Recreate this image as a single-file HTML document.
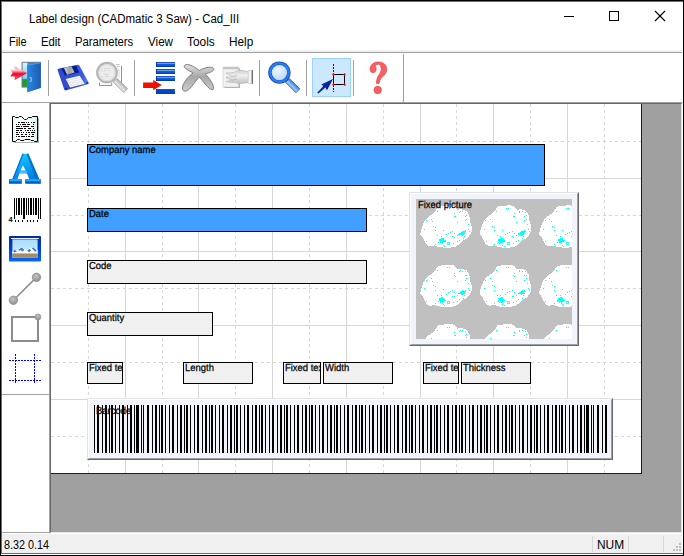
<!DOCTYPE html>
<html>
<head>
<meta charset="utf-8">
<title>Label design</title>
<style>
html,body{margin:0;padding:0;}
body{width:684px;height:556px;overflow:hidden;background:#fff;font-family:"Liberation Sans",sans-serif;color:#000;position:relative;}
.a{position:absolute;}
.t{position:absolute;white-space:pre;transform-origin:0 0;line-height:1;}
.ui{font-size:12px;}
.sep{position:absolute;width:1px;background:#a0a0a0;top:60px;height:36px;}
.fld{position:absolute;box-sizing:border-box;border:1px solid #000;overflow:hidden;}
.fld span{position:absolute;left:1.3px;top:0.85px;font-size:10.2px;text-rendering:geometricPrecision;-webkit-text-stroke:0.25px #000;line-height:1;white-space:pre;transform:scaleX(0.927);transform-origin:0 0;}
.blue{background:#409fff;}
.gray{background:#f0f0f0;}
.raised{position:absolute;box-sizing:border-box;background:#f1f5fb;border-style:solid;border-width:1px;border-color:#e3e3e3 #696969 #696969 #e3e3e3;}
.raised:before{content:"";position:absolute;left:0;top:0;right:0;bottom:0;border-style:solid;border-width:1px;border-color:#fff #a0a0a0 #a0a0a0 #fff;}
</style>
</head>
<body>
<!-- window frame -->
<div class="a" style="left:0;top:0;width:684px;height:556px;background:#000"></div>
<div class="a" style="left:1px;top:1px;width:682px;height:554px;background:#fff"></div>
<div class="a" style="left:1px;top:1px;width:682px;height:1px;background:#1883d7"></div>
<div class="a" style="left:1px;top:1px;width:1px;height:553px;background:#1883d7"></div>
<div class="a" style="left:1px;top:553px;width:682px;height:1px;background:#1883d7"></div>

<!-- title bar -->
<div class="t ui" id="title" style="left:29px;top:13px;transform:scaleX(0.958)">Label design (CADmatic 3 Saw) - Cad_III</div>
<svg class="a" style="left:560px;top:6px" width="112" height="20" viewBox="0 0 112 20" shape-rendering="crispEdges">
  <rect x="4" y="10" width="10" height="1" fill="#000"/>
  <rect x="49.5" y="5.5" width="9" height="9" fill="none" stroke="#000" stroke-width="1"/>
  <g shape-rendering="auto" stroke="#000" stroke-width="1.1"><line x1="95" y1="5" x2="105" y2="15"/><line x1="105" y1="5" x2="95" y2="15"/></g>
</svg>

<!-- menu bar -->
<div class="t ui" style="left:9px;top:36px;transform:scaleX(0.905)">File</div>
<div class="t ui" style="left:40.5px;top:36px;transform:scaleX(0.942)">Edit</div>
<div class="t ui" style="left:74.5px;top:36px;transform:scaleX(0.939)">Parameters</div>
<div class="t ui" style="left:148px;top:36px;transform:scaleX(0.969)">View</div>
<div class="t ui" style="left:186.8px;top:36px;transform:scaleX(0.99)">Tools</div>
<div class="t ui" style="left:228.5px;top:36px;transform:scaleX(0.982)">Help</div>
<div class="a" style="left:2px;top:50px;width:680px;height:2px;background:#f0f0f0"></div>
<div class="a" style="left:2px;top:52px;width:680px;height:1px;background:#a0a0a0"></div>

<!-- toolbar -->
<div class="sep" style="left:48px"></div>
<div class="sep" style="left:134px"></div>
<div class="sep" style="left:259px"></div>
<div class="sep" style="left:306px"></div>
<div class="sep" style="left:353px"></div>
<div class="a" style="left:403px;top:54px;width:1px;height:48px;background:#a0a0a0"></div>
<div class="a" style="left:312px;top:58px;width:39px;height:39px;box-sizing:border-box;background:#cce8ff;border:1px solid #99d1ff"></div>
<!--TB-START--><svg class="a" style="left:0;top:53px" width="404" height="49" viewBox="0 53 404 49">
<defs>
  <linearGradient id="gRed" x1="0" y1="0" x2="0" y2="1"><stop offset="0" stop-color="#ff98a8"/><stop offset="0.3" stop-color="#ffd0d8"/><stop offset="0.55" stop-color="#ee0828"/><stop offset="1" stop-color="#e86070"/></linearGradient>
  <linearGradient id="gDoor" x1="0" y1="0" x2="1" y2="0"><stop offset="0" stop-color="#2a86e0"/><stop offset="1" stop-color="#1a5cb4"/></linearGradient>
  <linearGradient id="gSky" x1="0" y1="0" x2="0" y2="1"><stop offset="0" stop-color="#d8f4fc"/><stop offset="1" stop-color="#7cc8f0"/></linearGradient>
  <linearGradient id="gFl" x1="0" y1="0" x2="1" y2="0"><stop offset="0" stop-color="#3048c8"/><stop offset="0.8" stop-color="#3c58e0"/><stop offset="1" stop-color="#7090f8"/></linearGradient>
  <linearGradient id="gMetal" x1="0" y1="0" x2="1" y2="0"><stop offset="0" stop-color="#d8d8d8"/><stop offset="0.5" stop-color="#a0a0a0"/><stop offset="1" stop-color="#c0c0c0"/></linearGradient>
  <linearGradient id="gHandleG" x1="0.25" y1="0.75" x2="0.75" y2="0.25"><stop offset="0" stop-color="#a8a8a8"/><stop offset="0.4" stop-color="#e4e4e4"/><stop offset="0.75" stop-color="#b4b4b4"/><stop offset="1" stop-color="#8c8c8c"/></linearGradient>
  <linearGradient id="gHandleB" x1="0.25" y1="0.75" x2="0.75" y2="0.25"><stop offset="0" stop-color="#2a6cd0"/><stop offset="0.4" stop-color="#9cc8f8"/><stop offset="0.75" stop-color="#3a84e4"/><stop offset="1" stop-color="#1c54b8"/></linearGradient>
  <linearGradient id="gBar" x1="0" y1="0" x2="0" y2="1"><stop offset="0" stop-color="#002c9c"/><stop offset="0.3" stop-color="#6c9ce4"/><stop offset="0.5" stop-color="#0a5ce4"/><stop offset="0.8" stop-color="#0a50d0"/><stop offset="1" stop-color="#002c9c"/></linearGradient>
  <linearGradient id="gX" x1="0" y1="0" x2="0" y2="1"><stop offset="0" stop-color="#e0e0e0"/><stop offset="0.45" stop-color="#a8a8a8"/><stop offset="1" stop-color="#cccccc"/></linearGradient>
  <linearGradient id="gHand" x1="0" y1="0" x2="0" y2="1"><stop offset="0" stop-color="#cfcfcf"/><stop offset="0.4" stop-color="#efefef"/><stop offset="1" stop-color="#c2c2c2"/></linearGradient>
  <radialGradient id="gLensB" cx="0.4" cy="0.35" r="0.7"><stop offset="0" stop-color="#eef6fe"/><stop offset="1" stop-color="#b8d8f8"/></radialGradient>
  <linearGradient id="gArrowB" x1="0" y1="0" x2="1" y2="1"><stop offset="0" stop-color="#0a3cb0"/><stop offset="1" stop-color="#00107c"/></linearGradient>
</defs>
<!-- 1 door / exit -->
<g>
  <rect x="21.5" y="61.8" width="19.5" height="25.8" fill="#6c7c8c"/>
  <rect x="22.6" y="62.8" width="5" height="16.4" fill="url(#gSky)"/>
  <rect x="22.6" y="79.2" width="5" height="7.4" fill="#1fa020"/>
  <polygon points="27.1,64.7 40.8,62.3 40.8,88 27.1,92.4" fill="url(#gDoor)"/>
  <polygon points="27.1,64.7 40.8,62.3 40.8,63.3 27.1,65.7" fill="#4aa0ec"/>
  <path d="M29.6,77.4 h1.6 v4 h-1.6" fill="none" stroke="#a8dcfc" stroke-width="0.9"/>
  <polygon points="10.2,69.6 14.9,69.6 14.6,65.9 27.2,73 14.6,80.2 14.9,76.4 10.2,76.4 12.6,73" fill="url(#gRed)"/>
</g>
<!-- 2 floppy -->
<g>
  <polygon points="57.4,69.6 59,68.6 78,64.8 79.3,65.4 89,83 88.6,84 65.6,90.6 64.4,90" fill="url(#gFl)"/>
  <polygon points="61.5,68.6 76,65.6 79.2,72.4 64.9,75.6" fill="#00208c"/>
  <polygon points="63.9,67.8 71.4,66.2 74.6,72.6 67,74.7" fill="url(#gMetal)"/>
  <polygon points="65.8,79 79.6,75.8 84.8,83.7 70.2,87.6" fill="#fafafa"/>
  <g stroke="#c8c8d0" stroke-width="0.5"><line x1="67" y1="80.6" x2="80.6" y2="77.4"/><line x1="68" y1="82.4" x2="81.8" y2="79.2"/><line x1="69" y1="84.2" x2="83" y2="81"/><line x1="70" y1="86" x2="84" y2="82.6"/></g>
  <circle cx="66.2" cy="88.6" r="0.9" fill="#102060"/><circle cx="87" cy="83" r="0.9" fill="#102060"/>
</g>
<!-- 3 preview magnifier (gray) -->
<g>
  <path d="M116,64.5 h3.6 M117,66.5 h2.4" fill="none" stroke="#c4c4c4" stroke-width="1"/><path d="M121.5,65.8 v16.6 M99.5,82.6 v2.9 h12.2 v-2.6" fill="none" stroke="#909090" stroke-width="1"/>
  <path d="M117.5,69.5 h1.6 v9" fill="none" stroke="#d0d0d0" stroke-width="0.8"/>
  <circle cx="107" cy="72.6" r="9.8" fill="#ededed" stroke="#b6b6b6" stroke-width="2.2"/>
  <circle cx="107" cy="72.6" r="8" fill="none" stroke="#dcdcdc" stroke-width="1"/>
  <g stroke="#d2d2d2" stroke-width="0.8"><line x1="104" y1="68.4" x2="110" y2="68.4"/><line x1="104" y1="70.6" x2="106" y2="70.6"/><line x1="108" y1="70.6" x2="109.5" y2="70.6"/><line x1="104" y1="74.4" x2="109" y2="74.4"/><line x1="101.5" y1="76.6" x2="103.5" y2="76.6"/><line x1="105" y1="76.6" x2="109" y2="76.6"/><line x1="102" y1="68" x2="102" y2="72"/></g>
  <polygon points="113.2,82 117,78.4 127.6,88.4 123.8,92.6" fill="url(#gHandleG)" stroke="#9a9a9a" stroke-width="0.7"/>
</g>
<!-- 4 insert row -->
<g>
  <rect x="156" y="62" width="19" height="5" fill="url(#gBar)"/>
  <rect x="156" y="69" width="19" height="5" fill="url(#gBar)"/>
  <rect x="156" y="76" width="19" height="5" fill="url(#gBar)"/>
  <rect x="156" y="89" width="19" height="5" fill="url(#gBar)"/>
  <rect x="156" y="62" width="0.8" height="5" fill="#002c9c"/><rect x="156" y="69" width="0.8" height="5" fill="#002c9c"/><rect x="156" y="76" width="0.8" height="5" fill="#002c9c"/><rect x="156" y="89" width="0.8" height="5" fill="#002c9c"/>
  <rect x="156.8" y="90" width="17.6" height="3.2" fill="#0a44c4"/>
  <polygon points="143.1,82.5 153.2,82.5 153.2,80 161.8,85.1 153.2,90.2 153.2,88 143.1,88" fill="#ee1100"/>
</g>
<!-- 5 X (gray) -->
<g>
  <path d="M184.3,66 C185.5,63.6 190.5,63.6 199.2,70.4 C205,67.2 212.6,66.2 213.7,68.6 C214.6,71 210,72.6 205.2,74 C209.6,78 215.4,87 213.2,89.4 C210.6,91.4 205.6,84.6 199.4,77 C194.6,81.6 189.6,91.8 184.4,91.2 C179.4,89.6 184.4,79.4 193,73 C189,70.6 183.6,68.4 184.3,66 Z" fill="url(#gX)" stroke="#767676" stroke-width="0.9"/>
</g>
<!-- 6 hand on page (gray) -->
<g>
  <rect x="224.4" y="68.4" width="15.4" height="19.6" fill="#9e9e9e"/>
  <rect x="223" y="67" width="15.6" height="20" fill="#f1f1f1" stroke="#d4d4d4" stroke-width="0.8"/>
  <rect x="223" y="67" width="15.4" height="2.2" fill="#c4c4c4"/>
  <g fill="#a8a8a8"><rect x="226" y="72.6" width="1" height="1"/><rect x="226" y="76.8" width="1" height="1"/><rect x="226" y="81.2" width="1" height="1"/></g>
  <path d="M227.6,73 L233.5,72.4 L236.8,71 C239.5,69.8 242.4,69.8 244.4,70.8 L248.4,71.6 V82.8 L244,83.2 C241,84 237.6,83.6 235,82.6 L228,82.2 L227.6,81 L232.8,80 L227.2,78.4 L227,77.2 L233,76.4 L227.6,74.4 Z" fill="url(#gHand)" stroke="#b0b0b0" stroke-width="0.5"/>
  <path d="M233,76.4 L237,75.6 M232.8,80 L236.6,79.2" stroke="#a4a4a4" stroke-width="0.6" fill="none"/>
  <rect x="248.2" y="70.4" width="4.6" height="13.2" fill="#f6f6f6" stroke="#c4c4c4" stroke-width="0.5"/>
  <rect x="251.6" y="70.2" width="1.4" height="13.6" fill="#6e6e6e"/>
</g>
<!-- 7 zoom (blue) -->
<g>
  <polygon points="285.6,82.4 289.4,78.6 299.8,88.8 296,92.8" fill="url(#gHandleB)" stroke="#1d50b4" stroke-width="0.7"/>
  <circle cx="279.4" cy="72.6" r="11.2" fill="#1c4cae"/>
  <circle cx="279.4" cy="72.6" r="10.3" fill="#2a80f2"/>
  <circle cx="279.4" cy="72.6" r="8.3" fill="#1e58c4"/>
  <circle cx="279.4" cy="72.6" r="7.7" fill="url(#gLensB)"/>
</g>
<!-- 8 select/snap tool -->
<g shape-rendering="crispEdges">
  <line x1="333.5" y1="64" x2="333.5" y2="92" stroke="#0000ff" stroke-width="1" stroke-dasharray="2 1"/>
  <rect x="333.5" y="74.5" width="11" height="10" fill="none" stroke="#000" stroke-width="1"/>
</g>
<g fill="#ff0000"><path d="M333.5,73 l1.5,1.5 l-1.5,1.5 l-1.5,-1.5z M344.5,73 l1.5,1.5 l-1.5,1.5 l-1.5,-1.5z M333.5,83 l1.5,1.5 l-1.5,1.5 l-1.5,-1.5z M344.5,83 l1.5,1.5 l-1.5,1.5 l-1.5,-1.5z"/></g>
<path d="M333,79 L327,90.2 L325.4,87.6 L318.4,93.6 L317.2,92.8 L323.4,86 L321.2,84.6 Z" fill="url(#gArrowB)"/>
<!-- 9 help -->
<g fill="#f66064" stroke="#f03c42" stroke-width="0.7">
<path d="M370.1,69.4 C370.1,64.5 374,62 378.3,62 C383.5,62 386.7,65 386.7,69.2 C386.7,73 384,75.4 382,77.2 C380,79.2 379.4,81 379.1,83.4 L376.5,83.4 C376.4,80 377.2,77.4 379.2,74.6 C380.6,72.6 381.2,71 381.2,69.2 C381.2,66 380,64.2 378.2,64.2 C376.8,64.2 375.6,65 375.2,66.2 C376.4,67 376.6,70 375.4,71.6 C374,73.4 370.1,73 370.1,69.4 Z"/>
<circle cx="377.7" cy="90" r="3.7"/>
</g>
</svg>
<!--TB-END-->

<!-- left panel + canvas frame -->
<div class="a" style="left:2px;top:102px;width:680px;height:1px;background:#a0a0a0"></div>
<div class="a" style="left:2px;top:394px;width:47px;height:1px;background:#a0a0a0"></div>
<div class="a" style="left:2px;top:532px;width:47px;height:1px;background:#a0a0a0"></div>
<div class="a" style="left:49px;top:102px;width:634px;height:432px;box-sizing:border-box;border-style:solid;border-width:1px;border-color:#a0a0a0 #fff #fff #a0a0a0;background:#a0a0a0">
  <div class="a" style="left:0;top:0;right:0;bottom:0;border-style:solid;border-width:1px;border-color:#696969 #e3e3e3 #e3e3e3 #696969"></div>
</div>
<!--LI-START--><svg class="a" style="left:2px;top:104px" width="47" height="290" viewBox="2 104 47 290">
<defs>
  <linearGradient id="gPaper" x1="0" y1="0" x2="1" y2="0"><stop offset="0" stop-color="#e4fafa"/><stop offset="0.3" stop-color="#ffffff"/><stop offset="0.7" stop-color="#f4ffff"/><stop offset="1" stop-color="#d0f4f4"/></linearGradient>
  <linearGradient id="gA" x1="0" y1="0" x2="0.3" y2="1"><stop offset="0" stop-color="#20c8ff"/><stop offset="0.6" stop-color="#08a4f4"/><stop offset="1" stop-color="#0880e8"/></linearGradient>
  <linearGradient id="gFrame" x1="0" y1="0" x2="0" y2="1"><stop offset="0" stop-color="#002c98"/><stop offset="0.5" stop-color="#0040c8"/><stop offset="1" stop-color="#0868f8"/></linearGradient>
  <linearGradient id="gSky2" x1="0" y1="0" x2="0" y2="1"><stop offset="0" stop-color="#a8dcfc"/><stop offset="1" stop-color="#d8f0ff"/></linearGradient>
  <radialGradient id="gBall" cx="0.45" cy="0.35" r="0.7"><stop offset="0" stop-color="#c4c4c4"/><stop offset="1" stop-color="#8a8a8a"/></radialGradient>
</defs>
<!-- receipt -->
<path d="M38.5,118 V142.5 H14" fill="none" stroke="#b0b0b0" stroke-width="1"/>
<path d="M12.5,116.5 H14.5 L15.5,117.5 H18.5 L19.5,116.5 H21.5 L24.5,119.5 H26.5 L28.5,117.5 H31.5 L32.5,116.5 H37.5 V141.5 H34.5 L33.5,140.5 H31 L30,139.5 H25 L24,140.5 H20.5 L19.5,139.5 H17.5 L15.5,141.5 H12.5 Z" fill="url(#gPaper)" stroke="#000" stroke-width="1" stroke-linejoin="miter"/>
<g fill="#000" shape-rendering="crispEdges"><rect x="18" y="122" width="2" height="1"/><rect x="21" y="122" width="4" height="1"/><rect x="26" y="122" width="1" height="1"/><rect x="28" y="122" width="1" height="1"/><rect x="31" y="122" width="1" height="1"/><rect x="33" y="122" width="2" height="1"/><rect x="16" y="124" width="1" height="1"/><rect x="18" y="124" width="1" height="1"/><rect x="20" y="124" width="1" height="1"/><rect x="22" y="124" width="4" height="1"/><rect x="27" y="124" width="3" height="1"/><rect x="33" y="124" width="1" height="1"/><rect x="16" y="126" width="4" height="1"/><rect x="21" y="126" width="1" height="1"/><rect x="23" y="126" width="6" height="1"/><rect x="31" y="126" width="3" height="1"/><rect x="16" y="128" width="7" height="1"/><rect x="24" y="128" width="2" height="1"/><rect x="28" y="128" width="3" height="1"/><rect x="33" y="128" width="1" height="1"/><rect x="16" y="130" width="3" height="1"/><rect x="20" y="130" width="2" height="1"/><rect x="25" y="130" width="1" height="1"/><rect x="27" y="130" width="2" height="1"/><rect x="30" y="130" width="1" height="1"/><rect x="32" y="130" width="1" height="1"/><rect x="34" y="130" width="1" height="1"/><rect x="16" y="132" width="2" height="1"/><rect x="19" y="132" width="1" height="1"/><rect x="21" y="132" width="1" height="1"/><rect x="23" y="132" width="1" height="1"/><rect x="26" y="132" width="1" height="1"/><rect x="28" y="132" width="2" height="1"/><rect x="31" y="132" width="4" height="1"/><rect x="16" y="134" width="3" height="1"/><rect x="21" y="134" width="2" height="1"/><rect x="25" y="134" width="2" height="1"/><rect x="29" y="134" width="1" height="1"/><rect x="32" y="134" width="2" height="1"/><rect x="16" y="136" width="1" height="1"/><rect x="18" y="136" width="2" height="1"/><rect x="21" y="136" width="4" height="1"/><rect x="26" y="136" width="1" height="1"/><rect x="28" y="136" width="2" height="1"/><rect x="31" y="136" width="3" height="1"/></g>
<!-- A -->
<g>
<path d="M22.4,153.8 L28.4,153.8 L39.4,179.6 L29.4,179.6 L27,173.6 L19.4,173.6 L17.4,179.6 L12.2,179.6 Z M22.9,165.6 L25.8,170.6 L20.4,170.6 Z" fill="url(#gA)" fill-rule="evenodd"/>
<polygon points="26.6,153.8 28.4,153.8 39.4,179.6 36,179.6" fill="#0a70c4"/>
<polygon points="22.4,153.8 23.6,153.8 13.6,179.6 12.2,179.6" fill="#0a6cd8"/>
<rect x="19.6" y="171.6" width="7.2" height="1" fill="#8cdcff"/>
<rect x="9" y="179.2" width="12.8" height="4.6" fill="#0a58cc"/>
<rect x="25.2" y="179.2" width="15.7" height="4.6" fill="#0a58cc"/>
<polygon points="10.4,179.2 21.4,179.2 20.4,181.2 9,181.2" fill="#18b0f8"/>
<polygon points="26.4,179.2 39.6,179.2 40.9,181.2 25.2,181.2" fill="#18b0f8"/>
</g>
<!-- barcode -->
<g fill="#000" shape-rendering="crispEdges">
  <rect x="14" y="198" width="1" height="21"/><rect x="16" y="198" width="1" height="17"/><rect x="18" y="198" width="2" height="17"/><rect x="21" y="198" width="1" height="17"/><rect x="23" y="198" width="2" height="21"/><rect x="26" y="198" width="1" height="17"/><rect x="28" y="198" width="1" height="17"/><rect x="30" y="198" width="2" height="17"/><rect x="33" y="198" width="1" height="17"/><rect x="35" y="198" width="2" height="17"/><rect x="38" y="198" width="1" height="21"/><rect x="40" y="198" width="1" height="21"/>
  <rect x="15" y="220" width="1" height="2"/><rect x="18" y="220" width="1" height="2"/><rect x="22" y="220" width="1" height="2"/><rect x="27" y="220" width="1" height="2"/><rect x="30" y="220" width="1" height="2"/><rect x="33" y="220" width="1" height="2"/><rect x="37" y="220" width="1" height="2"/>
</g>
<text x="8.4" y="222" font-family="Liberation Sans, sans-serif" font-weight="bold" font-size="7.4" fill="#000">4</text>
<!-- picture -->
<rect x="9" y="236" width="32" height="25.4" rx="1" fill="url(#gFrame)"/>
<rect x="11" y="238" width="28" height="1" fill="#e8f0ff"/>
<rect x="12.4" y="239.4" width="25.2" height="18.4" fill="url(#gSky2)"/>
<path d="M12.4,251.6 L14.4,249.6 L16.4,250.8 L18.6,248.6 L21.8,247.2 L24,248.8 L26.4,250.6 L29,248.6 L32.6,247.4 L35,248.8 L37.6,250.4 V254 H12.4 Z" fill="#fff"/>
<path d="M13,251 L15,249.8 L16.8,251.6 L14.6,252.6 Z M18.4,249.4 L21.8,247.4 L24.4,250 L22.6,251.6 L20.4,250 L19,251.2 Z M27.2,250.4 L29.6,248.8 L31,250.6 L29,252.6 Z M31.6,248.2 L33.4,247.6 L36.6,250.6 L35.2,252 L33.6,250 Z" fill="#2c7cf0"/>
<rect x="12.4" y="253.4" width="25.2" height="4.4" fill="#ac8a64"/>
<rect x="12.4" y="254.6" width="25.2" height="1" fill="#9a8878" opacity="0.6"/>
<!-- line -->
<line x1="13.4" y1="300.2" x2="36.4" y2="277.4" stroke="#8a8a8a" stroke-width="1.5"/>
<circle cx="13.4" cy="300.3" r="4.2" fill="url(#gBall)" stroke="#8e8e8e" stroke-width="0.8"/>
<circle cx="36.5" cy="277.3" r="4.2" fill="url(#gBall)" stroke="#8e8e8e" stroke-width="0.8"/>
<!-- rect -->
<rect x="12" y="317" width="26" height="24" fill="none" stroke="#8c8c8c" stroke-width="2" shape-rendering="crispEdges"/>
<circle cx="37.9" cy="316.9" r="3" fill="url(#gBall)" stroke="#8e8e8e" stroke-width="0.6"/>
<!-- dotted selection -->
<g stroke="#0000ff" stroke-width="1" stroke-dasharray="2 1" shape-rendering="crispEdges">
  <line x1="9" y1="360.5" x2="41" y2="360.5"/><line x1="9" y1="380.5" x2="41" y2="380.5"/>
  <line x1="15.5" y1="354" x2="15.5" y2="384"/><line x1="34.5" y1="354" x2="34.5" y2="384"/>
</g>
</svg>
<!--LI-END-->

<!-- page -->
<div class="a" style="left:51px;top:104px;width:591px;height:370px;background:#0000ff"></div>
<div class="a" id="page" style="left:51px;top:104px;width:590px;height:369px;background:#fff;overflow:hidden">
<svg class="a" style="left:0;top:0" width="590" height="369" shape-rendering="crispEdges" stroke="#d6d6d6" stroke-width="1">
  <g stroke-dasharray="3 3">
    <line x1="37.5" y1="0" x2="37.5" y2="369"/><line x1="111.5" y1="0" x2="111.5" y2="369"/><line x1="184.5" y1="0" x2="184.5" y2="369"/><line x1="258.5" y1="0" x2="258.5" y2="369"/><line x1="332.5" y1="0" x2="332.5" y2="369"/><line x1="405.5" y1="0" x2="405.5" y2="369"/><line x1="479.5" y1="0" x2="479.5" y2="369"/><line x1="553.5" y1="0" x2="553.5" y2="369"/>
    <line x1="0" y1="37.5" x2="590" y2="37.5"/><line x1="0" y1="111.5" x2="590" y2="111.5"/><line x1="0" y1="184.5" x2="590" y2="184.5"/><line x1="0" y1="258.5" x2="590" y2="258.5"/><line x1="0" y1="332.5" x2="590" y2="332.5"/>
  </g>
  <g>
    <line x1="74.5" y1="0" x2="74.5" y2="369"/><line x1="147.5" y1="0" x2="147.5" y2="369"/><line x1="221.5" y1="0" x2="221.5" y2="369"/><line x1="295.5" y1="0" x2="295.5" y2="369"/><line x1="369.5" y1="0" x2="369.5" y2="369"/><line x1="442.5" y1="0" x2="442.5" y2="369"/><line x1="516.5" y1="0" x2="516.5" y2="369"/>
    <line x1="0" y1="74.5" x2="590" y2="74.5"/><line x1="0" y1="147.5" x2="590" y2="147.5"/><line x1="0" y1="221.5" x2="590" y2="221.5"/><line x1="0" y1="295.5" x2="590" y2="295.5"/>
  </g>
</svg>
<!-- fields (coordinates relative to page: x-51, y-104) -->
<div class="fld blue" style="left:36px;top:40px;width:458px;height:42px"><span>Company name</span></div>
<div class="fld blue" style="left:36px;top:104px;width:280px;height:24px"><span>Date</span></div>
<div class="fld gray" style="left:36px;top:156px;width:280px;height:24px"><span>Code</span></div>
<div class="fld gray" style="left:36px;top:208px;width:126px;height:24px"><span>Quantity</span></div>
<div class="fld gray" style="left:36px;top:258px;width:36px;height:22px"><span>Fixed text</span></div>
<div class="fld gray" style="left:132px;top:258px;width:70px;height:22px"><span>Length</span></div>
<div class="fld gray" style="left:232px;top:258px;width:38px;height:22px"><span>Fixed text</span></div>
<div class="fld gray" style="left:272px;top:258px;width:70px;height:22px"><span>Width</span></div>
<div class="fld gray" style="left:372px;top:258px;width:36px;height:22px"><span>Fixed text</span></div>
<div class="fld gray" style="left:410px;top:258px;width:70px;height:22px"><span>Thickness</span></div>
<!--PIC-START--><div class="raised" style="left:358px;top:88px;width:170px;height:154px"></div>
<svg class="a" style="left:365px;top:95px" width="156" height="140" viewBox="0 0 156 140" shape-rendering="crispEdges"><rect width="156" height="140" fill="#c0c0c0"/><g transform="translate(0.0,0.0)"><polygon points="22.1,7.6 28,6.7 35.6,6.3 38.8,7.6 41.5,10.8 45.3,10.2 50.7,11.9 53.4,16.2 53.9,21.6 55.6,27 55.6,32.4 53.4,36.7 50.7,39.9 47.5,41 45.3,43.1 43.1,45.3 39.9,47.5 34.5,48.5 31.3,49.1 27,48.5 22.7,48 18.3,46.4 14,47.5 10.8,45.8 8.6,42.1 6.5,37.8 4.3,35.6 4.9,31.3 6.5,27 7.6,23.7 9.7,20.5 12.9,17.3 16.2,15.1 19.4,11.9 21,9.2" fill="#fff"/><g fill="#00ffff"><rect x="30.8" y="9.0" width="1" height="1"/><rect x="32.9" y="9.0" width="1" height="1"/><rect x="20.9" y="11.9" width="1" height="1"/><rect x="43.2" y="13.0" width="1" height="1"/><rect x="46.4" y="12.4" width="1" height="1"/><rect x="48.6" y="16.8" width="1" height="1"/><rect x="50.2" y="16.2" width="1" height="1"/><rect x="38.3" y="14.1" width="1" height="1"/><rect x="37.8" y="16.8" width="1" height="1"/><rect x="41.0" y="22.7" width="1" height="1"/><rect x="48.6" y="21.1" width="1" height="1"/><rect x="51.8" y="24.9" width="1" height="1"/><rect x="52.4" y="29.7" width="1" height="1"/><rect x="53.4" y="31.9" width="1" height="1"/><rect x="14.6" y="20.0" width="1" height="1"/><rect x="9.7" y="21.1" width="1" height="1"/><rect x="16.2" y="22.2" width="1" height="1"/><rect x="16.8" y="27.0" width="1" height="1"/><rect x="18.9" y="27.5" width="1" height="1"/><rect x="18.9" y="31.3" width="1" height="1"/><rect x="8.1" y="30.0" width="1" height="1"/><rect x="27.0" y="30.8" width="1" height="1"/><rect x="21.1" y="36.2" width="1" height="1"/><rect x="24.9" y="36.7" width="1" height="1"/><rect x="29.7" y="35.1" width="1" height="1"/><rect x="31.9" y="34.0" width="1" height="1"/><rect x="34.0" y="32.9" width="1" height="1"/><rect x="36.2" y="31.9" width="1" height="1"/><rect x="38.3" y="34.0" width="1" height="1"/><rect x="40.5" y="36.2" width="1" height="1"/><rect x="36.2" y="37.3" width="1" height="1"/><rect x="37.8" y="37.8" width="1" height="1"/><rect x="42.6" y="40.5" width="1" height="1"/><rect x="41.0" y="42.1" width="1" height="1"/><rect x="47.0" y="39.4" width="1" height="1"/><rect x="48.0" y="36.7" width="1" height="1"/><rect x="22.7" y="40.0" width="1" height="1"/><rect x="22.2" y="42.6" width="1" height="1"/><rect x="10.3" y="42.1" width="1" height="1"/><rect x="18.9" y="44.8" width="1" height="1"/><rect x="37.3" y="43.7" width="1" height="1"/><rect x="27.0" y="45.9" width="1" height="1"/><rect x="28.1" y="47.0" width="1" height="1"/><rect x="43.7" y="11.9" width="1" height="1"/><rect x="49.1" y="13.0" width="1" height="1"/><rect x="38.9" y="17.3" width="1" height="1"/><rect x="50.4" y="19.5" width="1" height="1"/><path d="M24,40 l2,-1.4 l1.6,0.6 l0.8,1.8 l1.6,0.4 l-0.6,1.6 l-2,0.2 l-0.6,2.2 l-1.2,-1.6 l-1.8,1 l0.6,-2.2 l-1.8,-0.4 z"/><path d="M42.4,34.6 l2.6,-1 l1.6,-1.6 l2,0.4 l0.6,-1.4 l1,1.6 l-1.4,1.4 l0.4,1.4 l-2,0.2 l-1,1.6 l-1.2,-1.6 l-2.6,0.2 z"/><rect x="31.6" y="43" width="2.2" height="2.2" fill="none" stroke="#00ffff" stroke-width="0.8"/></g></g><g transform="translate(59.4,0.0)"><polygon points="22.1,7.6 28,6.7 35.6,6.3 38.8,7.6 41.5,10.8 45.3,10.2 50.7,11.9 53.4,16.2 53.9,21.6 55.6,27 55.6,32.4 53.4,36.7 50.7,39.9 47.5,41 45.3,43.1 43.1,45.3 39.9,47.5 34.5,48.5 31.3,49.1 27,48.5 22.7,48 18.3,46.4 14,47.5 10.8,45.8 8.6,42.1 6.5,37.8 4.3,35.6 4.9,31.3 6.5,27 7.6,23.7 9.7,20.5 12.9,17.3 16.2,15.1 19.4,11.9 21,9.2" fill="#fff"/><g fill="#00ffff"><rect x="30.8" y="9.0" width="1" height="1"/><rect x="32.9" y="9.0" width="1" height="1"/><rect x="20.9" y="11.9" width="1" height="1"/><rect x="43.2" y="13.0" width="1" height="1"/><rect x="46.4" y="12.4" width="1" height="1"/><rect x="48.6" y="16.8" width="1" height="1"/><rect x="50.2" y="16.2" width="1" height="1"/><rect x="38.3" y="14.1" width="1" height="1"/><rect x="37.8" y="16.8" width="1" height="1"/><rect x="41.0" y="22.7" width="1" height="1"/><rect x="48.6" y="21.1" width="1" height="1"/><rect x="51.8" y="24.9" width="1" height="1"/><rect x="52.4" y="29.7" width="1" height="1"/><rect x="53.4" y="31.9" width="1" height="1"/><rect x="14.6" y="20.0" width="1" height="1"/><rect x="9.7" y="21.1" width="1" height="1"/><rect x="16.2" y="22.2" width="1" height="1"/><rect x="16.8" y="27.0" width="1" height="1"/><rect x="18.9" y="27.5" width="1" height="1"/><rect x="18.9" y="31.3" width="1" height="1"/><rect x="8.1" y="30.0" width="1" height="1"/><rect x="27.0" y="30.8" width="1" height="1"/><rect x="21.1" y="36.2" width="1" height="1"/><rect x="24.9" y="36.7" width="1" height="1"/><rect x="29.7" y="35.1" width="1" height="1"/><rect x="31.9" y="34.0" width="1" height="1"/><rect x="34.0" y="32.9" width="1" height="1"/><rect x="36.2" y="31.9" width="1" height="1"/><rect x="38.3" y="34.0" width="1" height="1"/><rect x="40.5" y="36.2" width="1" height="1"/><rect x="36.2" y="37.3" width="1" height="1"/><rect x="37.8" y="37.8" width="1" height="1"/><rect x="42.6" y="40.5" width="1" height="1"/><rect x="41.0" y="42.1" width="1" height="1"/><rect x="47.0" y="39.4" width="1" height="1"/><rect x="48.0" y="36.7" width="1" height="1"/><rect x="22.7" y="40.0" width="1" height="1"/><rect x="22.2" y="42.6" width="1" height="1"/><rect x="10.3" y="42.1" width="1" height="1"/><rect x="18.9" y="44.8" width="1" height="1"/><rect x="37.3" y="43.7" width="1" height="1"/><rect x="27.0" y="45.9" width="1" height="1"/><rect x="28.1" y="47.0" width="1" height="1"/><rect x="43.7" y="11.9" width="1" height="1"/><rect x="49.1" y="13.0" width="1" height="1"/><rect x="38.9" y="17.3" width="1" height="1"/><rect x="50.4" y="19.5" width="1" height="1"/><path d="M24,40 l2,-1.4 l1.6,0.6 l0.8,1.8 l1.6,0.4 l-0.6,1.6 l-2,0.2 l-0.6,2.2 l-1.2,-1.6 l-1.8,1 l0.6,-2.2 l-1.8,-0.4 z"/><path d="M42.4,34.6 l2.6,-1 l1.6,-1.6 l2,0.4 l0.6,-1.4 l1,1.6 l-1.4,1.4 l0.4,1.4 l-2,0.2 l-1,1.6 l-1.2,-1.6 l-2.6,0.2 z"/><rect x="31.6" y="43" width="2.2" height="2.2" fill="none" stroke="#00ffff" stroke-width="0.8"/></g></g><g transform="translate(118.8,0.0)"><polygon points="22.1,7.6 28,6.7 35.6,6.3 38.8,7.6 41.5,10.8 45.3,10.2 50.7,11.9 53.4,16.2 53.9,21.6 55.6,27 55.6,32.4 53.4,36.7 50.7,39.9 47.5,41 45.3,43.1 43.1,45.3 39.9,47.5 34.5,48.5 31.3,49.1 27,48.5 22.7,48 18.3,46.4 14,47.5 10.8,45.8 8.6,42.1 6.5,37.8 4.3,35.6 4.9,31.3 6.5,27 7.6,23.7 9.7,20.5 12.9,17.3 16.2,15.1 19.4,11.9 21,9.2" fill="#fff"/><g fill="#00ffff"><rect x="30.8" y="9.0" width="1" height="1"/><rect x="32.9" y="9.0" width="1" height="1"/><rect x="20.9" y="11.9" width="1" height="1"/><rect x="43.2" y="13.0" width="1" height="1"/><rect x="46.4" y="12.4" width="1" height="1"/><rect x="48.6" y="16.8" width="1" height="1"/><rect x="50.2" y="16.2" width="1" height="1"/><rect x="38.3" y="14.1" width="1" height="1"/><rect x="37.8" y="16.8" width="1" height="1"/><rect x="41.0" y="22.7" width="1" height="1"/><rect x="48.6" y="21.1" width="1" height="1"/><rect x="51.8" y="24.9" width="1" height="1"/><rect x="52.4" y="29.7" width="1" height="1"/><rect x="53.4" y="31.9" width="1" height="1"/><rect x="14.6" y="20.0" width="1" height="1"/><rect x="9.7" y="21.1" width="1" height="1"/><rect x="16.2" y="22.2" width="1" height="1"/><rect x="16.8" y="27.0" width="1" height="1"/><rect x="18.9" y="27.5" width="1" height="1"/><rect x="18.9" y="31.3" width="1" height="1"/><rect x="8.1" y="30.0" width="1" height="1"/><rect x="27.0" y="30.8" width="1" height="1"/><rect x="21.1" y="36.2" width="1" height="1"/><rect x="24.9" y="36.7" width="1" height="1"/><rect x="29.7" y="35.1" width="1" height="1"/><rect x="31.9" y="34.0" width="1" height="1"/><rect x="34.0" y="32.9" width="1" height="1"/><rect x="36.2" y="31.9" width="1" height="1"/><rect x="38.3" y="34.0" width="1" height="1"/><rect x="40.5" y="36.2" width="1" height="1"/><rect x="36.2" y="37.3" width="1" height="1"/><rect x="37.8" y="37.8" width="1" height="1"/><rect x="42.6" y="40.5" width="1" height="1"/><rect x="41.0" y="42.1" width="1" height="1"/><rect x="47.0" y="39.4" width="1" height="1"/><rect x="48.0" y="36.7" width="1" height="1"/><rect x="22.7" y="40.0" width="1" height="1"/><rect x="22.2" y="42.6" width="1" height="1"/><rect x="10.3" y="42.1" width="1" height="1"/><rect x="18.9" y="44.8" width="1" height="1"/><rect x="37.3" y="43.7" width="1" height="1"/><rect x="27.0" y="45.9" width="1" height="1"/><rect x="28.1" y="47.0" width="1" height="1"/><rect x="43.7" y="11.9" width="1" height="1"/><rect x="49.1" y="13.0" width="1" height="1"/><rect x="38.9" y="17.3" width="1" height="1"/><rect x="50.4" y="19.5" width="1" height="1"/><path d="M24,40 l2,-1.4 l1.6,0.6 l0.8,1.8 l1.6,0.4 l-0.6,1.6 l-2,0.2 l-0.6,2.2 l-1.2,-1.6 l-1.8,1 l0.6,-2.2 l-1.8,-0.4 z"/><path d="M42.4,34.6 l2.6,-1 l1.6,-1.6 l2,0.4 l0.6,-1.4 l1,1.6 l-1.4,1.4 l0.4,1.4 l-2,0.2 l-1,1.6 l-1.2,-1.6 l-2.6,0.2 z"/><rect x="31.6" y="43" width="2.2" height="2.2" fill="none" stroke="#00ffff" stroke-width="0.8"/></g></g><g transform="translate(0.0,59.4)"><polygon points="22.1,7.6 28,6.7 35.6,6.3 38.8,7.6 41.5,10.8 45.3,10.2 50.7,11.9 53.4,16.2 53.9,21.6 55.6,27 55.6,32.4 53.4,36.7 50.7,39.9 47.5,41 45.3,43.1 43.1,45.3 39.9,47.5 34.5,48.5 31.3,49.1 27,48.5 22.7,48 18.3,46.4 14,47.5 10.8,45.8 8.6,42.1 6.5,37.8 4.3,35.6 4.9,31.3 6.5,27 7.6,23.7 9.7,20.5 12.9,17.3 16.2,15.1 19.4,11.9 21,9.2" fill="#fff"/><g fill="#00ffff"><rect x="30.8" y="9.0" width="1" height="1"/><rect x="32.9" y="9.0" width="1" height="1"/><rect x="20.9" y="11.9" width="1" height="1"/><rect x="43.2" y="13.0" width="1" height="1"/><rect x="46.4" y="12.4" width="1" height="1"/><rect x="48.6" y="16.8" width="1" height="1"/><rect x="50.2" y="16.2" width="1" height="1"/><rect x="38.3" y="14.1" width="1" height="1"/><rect x="37.8" y="16.8" width="1" height="1"/><rect x="41.0" y="22.7" width="1" height="1"/><rect x="48.6" y="21.1" width="1" height="1"/><rect x="51.8" y="24.9" width="1" height="1"/><rect x="52.4" y="29.7" width="1" height="1"/><rect x="53.4" y="31.9" width="1" height="1"/><rect x="14.6" y="20.0" width="1" height="1"/><rect x="9.7" y="21.1" width="1" height="1"/><rect x="16.2" y="22.2" width="1" height="1"/><rect x="16.8" y="27.0" width="1" height="1"/><rect x="18.9" y="27.5" width="1" height="1"/><rect x="18.9" y="31.3" width="1" height="1"/><rect x="8.1" y="30.0" width="1" height="1"/><rect x="27.0" y="30.8" width="1" height="1"/><rect x="21.1" y="36.2" width="1" height="1"/><rect x="24.9" y="36.7" width="1" height="1"/><rect x="29.7" y="35.1" width="1" height="1"/><rect x="31.9" y="34.0" width="1" height="1"/><rect x="34.0" y="32.9" width="1" height="1"/><rect x="36.2" y="31.9" width="1" height="1"/><rect x="38.3" y="34.0" width="1" height="1"/><rect x="40.5" y="36.2" width="1" height="1"/><rect x="36.2" y="37.3" width="1" height="1"/><rect x="37.8" y="37.8" width="1" height="1"/><rect x="42.6" y="40.5" width="1" height="1"/><rect x="41.0" y="42.1" width="1" height="1"/><rect x="47.0" y="39.4" width="1" height="1"/><rect x="48.0" y="36.7" width="1" height="1"/><rect x="22.7" y="40.0" width="1" height="1"/><rect x="22.2" y="42.6" width="1" height="1"/><rect x="10.3" y="42.1" width="1" height="1"/><rect x="18.9" y="44.8" width="1" height="1"/><rect x="37.3" y="43.7" width="1" height="1"/><rect x="27.0" y="45.9" width="1" height="1"/><rect x="28.1" y="47.0" width="1" height="1"/><rect x="43.7" y="11.9" width="1" height="1"/><rect x="49.1" y="13.0" width="1" height="1"/><rect x="38.9" y="17.3" width="1" height="1"/><rect x="50.4" y="19.5" width="1" height="1"/><path d="M24,40 l2,-1.4 l1.6,0.6 l0.8,1.8 l1.6,0.4 l-0.6,1.6 l-2,0.2 l-0.6,2.2 l-1.2,-1.6 l-1.8,1 l0.6,-2.2 l-1.8,-0.4 z"/><path d="M42.4,34.6 l2.6,-1 l1.6,-1.6 l2,0.4 l0.6,-1.4 l1,1.6 l-1.4,1.4 l0.4,1.4 l-2,0.2 l-1,1.6 l-1.2,-1.6 l-2.6,0.2 z"/><rect x="31.6" y="43" width="2.2" height="2.2" fill="none" stroke="#00ffff" stroke-width="0.8"/></g></g><g transform="translate(59.4,59.4)"><polygon points="22.1,7.6 28,6.7 35.6,6.3 38.8,7.6 41.5,10.8 45.3,10.2 50.7,11.9 53.4,16.2 53.9,21.6 55.6,27 55.6,32.4 53.4,36.7 50.7,39.9 47.5,41 45.3,43.1 43.1,45.3 39.9,47.5 34.5,48.5 31.3,49.1 27,48.5 22.7,48 18.3,46.4 14,47.5 10.8,45.8 8.6,42.1 6.5,37.8 4.3,35.6 4.9,31.3 6.5,27 7.6,23.7 9.7,20.5 12.9,17.3 16.2,15.1 19.4,11.9 21,9.2" fill="#fff"/><g fill="#00ffff"><rect x="30.8" y="9.0" width="1" height="1"/><rect x="32.9" y="9.0" width="1" height="1"/><rect x="20.9" y="11.9" width="1" height="1"/><rect x="43.2" y="13.0" width="1" height="1"/><rect x="46.4" y="12.4" width="1" height="1"/><rect x="48.6" y="16.8" width="1" height="1"/><rect x="50.2" y="16.2" width="1" height="1"/><rect x="38.3" y="14.1" width="1" height="1"/><rect x="37.8" y="16.8" width="1" height="1"/><rect x="41.0" y="22.7" width="1" height="1"/><rect x="48.6" y="21.1" width="1" height="1"/><rect x="51.8" y="24.9" width="1" height="1"/><rect x="52.4" y="29.7" width="1" height="1"/><rect x="53.4" y="31.9" width="1" height="1"/><rect x="14.6" y="20.0" width="1" height="1"/><rect x="9.7" y="21.1" width="1" height="1"/><rect x="16.2" y="22.2" width="1" height="1"/><rect x="16.8" y="27.0" width="1" height="1"/><rect x="18.9" y="27.5" width="1" height="1"/><rect x="18.9" y="31.3" width="1" height="1"/><rect x="8.1" y="30.0" width="1" height="1"/><rect x="27.0" y="30.8" width="1" height="1"/><rect x="21.1" y="36.2" width="1" height="1"/><rect x="24.9" y="36.7" width="1" height="1"/><rect x="29.7" y="35.1" width="1" height="1"/><rect x="31.9" y="34.0" width="1" height="1"/><rect x="34.0" y="32.9" width="1" height="1"/><rect x="36.2" y="31.9" width="1" height="1"/><rect x="38.3" y="34.0" width="1" height="1"/><rect x="40.5" y="36.2" width="1" height="1"/><rect x="36.2" y="37.3" width="1" height="1"/><rect x="37.8" y="37.8" width="1" height="1"/><rect x="42.6" y="40.5" width="1" height="1"/><rect x="41.0" y="42.1" width="1" height="1"/><rect x="47.0" y="39.4" width="1" height="1"/><rect x="48.0" y="36.7" width="1" height="1"/><rect x="22.7" y="40.0" width="1" height="1"/><rect x="22.2" y="42.6" width="1" height="1"/><rect x="10.3" y="42.1" width="1" height="1"/><rect x="18.9" y="44.8" width="1" height="1"/><rect x="37.3" y="43.7" width="1" height="1"/><rect x="27.0" y="45.9" width="1" height="1"/><rect x="28.1" y="47.0" width="1" height="1"/><rect x="43.7" y="11.9" width="1" height="1"/><rect x="49.1" y="13.0" width="1" height="1"/><rect x="38.9" y="17.3" width="1" height="1"/><rect x="50.4" y="19.5" width="1" height="1"/><path d="M24,40 l2,-1.4 l1.6,0.6 l0.8,1.8 l1.6,0.4 l-0.6,1.6 l-2,0.2 l-0.6,2.2 l-1.2,-1.6 l-1.8,1 l0.6,-2.2 l-1.8,-0.4 z"/><path d="M42.4,34.6 l2.6,-1 l1.6,-1.6 l2,0.4 l0.6,-1.4 l1,1.6 l-1.4,1.4 l0.4,1.4 l-2,0.2 l-1,1.6 l-1.2,-1.6 l-2.6,0.2 z"/><rect x="31.6" y="43" width="2.2" height="2.2" fill="none" stroke="#00ffff" stroke-width="0.8"/></g></g><g transform="translate(118.8,59.4)"><polygon points="22.1,7.6 28,6.7 35.6,6.3 38.8,7.6 41.5,10.8 45.3,10.2 50.7,11.9 53.4,16.2 53.9,21.6 55.6,27 55.6,32.4 53.4,36.7 50.7,39.9 47.5,41 45.3,43.1 43.1,45.3 39.9,47.5 34.5,48.5 31.3,49.1 27,48.5 22.7,48 18.3,46.4 14,47.5 10.8,45.8 8.6,42.1 6.5,37.8 4.3,35.6 4.9,31.3 6.5,27 7.6,23.7 9.7,20.5 12.9,17.3 16.2,15.1 19.4,11.9 21,9.2" fill="#fff"/><g fill="#00ffff"><rect x="30.8" y="9.0" width="1" height="1"/><rect x="32.9" y="9.0" width="1" height="1"/><rect x="20.9" y="11.9" width="1" height="1"/><rect x="43.2" y="13.0" width="1" height="1"/><rect x="46.4" y="12.4" width="1" height="1"/><rect x="48.6" y="16.8" width="1" height="1"/><rect x="50.2" y="16.2" width="1" height="1"/><rect x="38.3" y="14.1" width="1" height="1"/><rect x="37.8" y="16.8" width="1" height="1"/><rect x="41.0" y="22.7" width="1" height="1"/><rect x="48.6" y="21.1" width="1" height="1"/><rect x="51.8" y="24.9" width="1" height="1"/><rect x="52.4" y="29.7" width="1" height="1"/><rect x="53.4" y="31.9" width="1" height="1"/><rect x="14.6" y="20.0" width="1" height="1"/><rect x="9.7" y="21.1" width="1" height="1"/><rect x="16.2" y="22.2" width="1" height="1"/><rect x="16.8" y="27.0" width="1" height="1"/><rect x="18.9" y="27.5" width="1" height="1"/><rect x="18.9" y="31.3" width="1" height="1"/><rect x="8.1" y="30.0" width="1" height="1"/><rect x="27.0" y="30.8" width="1" height="1"/><rect x="21.1" y="36.2" width="1" height="1"/><rect x="24.9" y="36.7" width="1" height="1"/><rect x="29.7" y="35.1" width="1" height="1"/><rect x="31.9" y="34.0" width="1" height="1"/><rect x="34.0" y="32.9" width="1" height="1"/><rect x="36.2" y="31.9" width="1" height="1"/><rect x="38.3" y="34.0" width="1" height="1"/><rect x="40.5" y="36.2" width="1" height="1"/><rect x="36.2" y="37.3" width="1" height="1"/><rect x="37.8" y="37.8" width="1" height="1"/><rect x="42.6" y="40.5" width="1" height="1"/><rect x="41.0" y="42.1" width="1" height="1"/><rect x="47.0" y="39.4" width="1" height="1"/><rect x="48.0" y="36.7" width="1" height="1"/><rect x="22.7" y="40.0" width="1" height="1"/><rect x="22.2" y="42.6" width="1" height="1"/><rect x="10.3" y="42.1" width="1" height="1"/><rect x="18.9" y="44.8" width="1" height="1"/><rect x="37.3" y="43.7" width="1" height="1"/><rect x="27.0" y="45.9" width="1" height="1"/><rect x="28.1" y="47.0" width="1" height="1"/><rect x="43.7" y="11.9" width="1" height="1"/><rect x="49.1" y="13.0" width="1" height="1"/><rect x="38.9" y="17.3" width="1" height="1"/><rect x="50.4" y="19.5" width="1" height="1"/><path d="M24,40 l2,-1.4 l1.6,0.6 l0.8,1.8 l1.6,0.4 l-0.6,1.6 l-2,0.2 l-0.6,2.2 l-1.2,-1.6 l-1.8,1 l0.6,-2.2 l-1.8,-0.4 z"/><path d="M42.4,34.6 l2.6,-1 l1.6,-1.6 l2,0.4 l0.6,-1.4 l1,1.6 l-1.4,1.4 l0.4,1.4 l-2,0.2 l-1,1.6 l-1.2,-1.6 l-2.6,0.2 z"/><rect x="31.6" y="43" width="2.2" height="2.2" fill="none" stroke="#00ffff" stroke-width="0.8"/></g></g><g transform="translate(0.0,118.8)"><polygon points="22.1,7.6 28,6.7 35.6,6.3 38.8,7.6 41.5,10.8 45.3,10.2 50.7,11.9 53.4,16.2 53.9,21.6 55.6,27 55.6,32.4 53.4,36.7 50.7,39.9 47.5,41 45.3,43.1 43.1,45.3 39.9,47.5 34.5,48.5 31.3,49.1 27,48.5 22.7,48 18.3,46.4 14,47.5 10.8,45.8 8.6,42.1 6.5,37.8 4.3,35.6 4.9,31.3 6.5,27 7.6,23.7 9.7,20.5 12.9,17.3 16.2,15.1 19.4,11.9 21,9.2" fill="#fff"/><g fill="#00ffff"><rect x="30.8" y="9.0" width="1" height="1"/><rect x="32.9" y="9.0" width="1" height="1"/><rect x="20.9" y="11.9" width="1" height="1"/><rect x="43.2" y="13.0" width="1" height="1"/><rect x="46.4" y="12.4" width="1" height="1"/><rect x="48.6" y="16.8" width="1" height="1"/><rect x="50.2" y="16.2" width="1" height="1"/><rect x="38.3" y="14.1" width="1" height="1"/><rect x="37.8" y="16.8" width="1" height="1"/><rect x="41.0" y="22.7" width="1" height="1"/><rect x="48.6" y="21.1" width="1" height="1"/><rect x="51.8" y="24.9" width="1" height="1"/><rect x="52.4" y="29.7" width="1" height="1"/><rect x="53.4" y="31.9" width="1" height="1"/><rect x="14.6" y="20.0" width="1" height="1"/><rect x="9.7" y="21.1" width="1" height="1"/><rect x="16.2" y="22.2" width="1" height="1"/><rect x="16.8" y="27.0" width="1" height="1"/><rect x="18.9" y="27.5" width="1" height="1"/><rect x="18.9" y="31.3" width="1" height="1"/><rect x="8.1" y="30.0" width="1" height="1"/><rect x="27.0" y="30.8" width="1" height="1"/><rect x="21.1" y="36.2" width="1" height="1"/><rect x="24.9" y="36.7" width="1" height="1"/><rect x="29.7" y="35.1" width="1" height="1"/><rect x="31.9" y="34.0" width="1" height="1"/><rect x="34.0" y="32.9" width="1" height="1"/><rect x="36.2" y="31.9" width="1" height="1"/><rect x="38.3" y="34.0" width="1" height="1"/><rect x="40.5" y="36.2" width="1" height="1"/><rect x="36.2" y="37.3" width="1" height="1"/><rect x="37.8" y="37.8" width="1" height="1"/><rect x="42.6" y="40.5" width="1" height="1"/><rect x="41.0" y="42.1" width="1" height="1"/><rect x="47.0" y="39.4" width="1" height="1"/><rect x="48.0" y="36.7" width="1" height="1"/><rect x="22.7" y="40.0" width="1" height="1"/><rect x="22.2" y="42.6" width="1" height="1"/><rect x="10.3" y="42.1" width="1" height="1"/><rect x="18.9" y="44.8" width="1" height="1"/><rect x="37.3" y="43.7" width="1" height="1"/><rect x="27.0" y="45.9" width="1" height="1"/><rect x="28.1" y="47.0" width="1" height="1"/><rect x="43.7" y="11.9" width="1" height="1"/><rect x="49.1" y="13.0" width="1" height="1"/><rect x="38.9" y="17.3" width="1" height="1"/><rect x="50.4" y="19.5" width="1" height="1"/><path d="M24,40 l2,-1.4 l1.6,0.6 l0.8,1.8 l1.6,0.4 l-0.6,1.6 l-2,0.2 l-0.6,2.2 l-1.2,-1.6 l-1.8,1 l0.6,-2.2 l-1.8,-0.4 z"/><path d="M42.4,34.6 l2.6,-1 l1.6,-1.6 l2,0.4 l0.6,-1.4 l1,1.6 l-1.4,1.4 l0.4,1.4 l-2,0.2 l-1,1.6 l-1.2,-1.6 l-2.6,0.2 z"/><rect x="31.6" y="43" width="2.2" height="2.2" fill="none" stroke="#00ffff" stroke-width="0.8"/></g></g><g transform="translate(59.4,118.8)"><polygon points="22.1,7.6 28,6.7 35.6,6.3 38.8,7.6 41.5,10.8 45.3,10.2 50.7,11.9 53.4,16.2 53.9,21.6 55.6,27 55.6,32.4 53.4,36.7 50.7,39.9 47.5,41 45.3,43.1 43.1,45.3 39.9,47.5 34.5,48.5 31.3,49.1 27,48.5 22.7,48 18.3,46.4 14,47.5 10.8,45.8 8.6,42.1 6.5,37.8 4.3,35.6 4.9,31.3 6.5,27 7.6,23.7 9.7,20.5 12.9,17.3 16.2,15.1 19.4,11.9 21,9.2" fill="#fff"/><g fill="#00ffff"><rect x="30.8" y="9.0" width="1" height="1"/><rect x="32.9" y="9.0" width="1" height="1"/><rect x="20.9" y="11.9" width="1" height="1"/><rect x="43.2" y="13.0" width="1" height="1"/><rect x="46.4" y="12.4" width="1" height="1"/><rect x="48.6" y="16.8" width="1" height="1"/><rect x="50.2" y="16.2" width="1" height="1"/><rect x="38.3" y="14.1" width="1" height="1"/><rect x="37.8" y="16.8" width="1" height="1"/><rect x="41.0" y="22.7" width="1" height="1"/><rect x="48.6" y="21.1" width="1" height="1"/><rect x="51.8" y="24.9" width="1" height="1"/><rect x="52.4" y="29.7" width="1" height="1"/><rect x="53.4" y="31.9" width="1" height="1"/><rect x="14.6" y="20.0" width="1" height="1"/><rect x="9.7" y="21.1" width="1" height="1"/><rect x="16.2" y="22.2" width="1" height="1"/><rect x="16.8" y="27.0" width="1" height="1"/><rect x="18.9" y="27.5" width="1" height="1"/><rect x="18.9" y="31.3" width="1" height="1"/><rect x="8.1" y="30.0" width="1" height="1"/><rect x="27.0" y="30.8" width="1" height="1"/><rect x="21.1" y="36.2" width="1" height="1"/><rect x="24.9" y="36.7" width="1" height="1"/><rect x="29.7" y="35.1" width="1" height="1"/><rect x="31.9" y="34.0" width="1" height="1"/><rect x="34.0" y="32.9" width="1" height="1"/><rect x="36.2" y="31.9" width="1" height="1"/><rect x="38.3" y="34.0" width="1" height="1"/><rect x="40.5" y="36.2" width="1" height="1"/><rect x="36.2" y="37.3" width="1" height="1"/><rect x="37.8" y="37.8" width="1" height="1"/><rect x="42.6" y="40.5" width="1" height="1"/><rect x="41.0" y="42.1" width="1" height="1"/><rect x="47.0" y="39.4" width="1" height="1"/><rect x="48.0" y="36.7" width="1" height="1"/><rect x="22.7" y="40.0" width="1" height="1"/><rect x="22.2" y="42.6" width="1" height="1"/><rect x="10.3" y="42.1" width="1" height="1"/><rect x="18.9" y="44.8" width="1" height="1"/><rect x="37.3" y="43.7" width="1" height="1"/><rect x="27.0" y="45.9" width="1" height="1"/><rect x="28.1" y="47.0" width="1" height="1"/><rect x="43.7" y="11.9" width="1" height="1"/><rect x="49.1" y="13.0" width="1" height="1"/><rect x="38.9" y="17.3" width="1" height="1"/><rect x="50.4" y="19.5" width="1" height="1"/><path d="M24,40 l2,-1.4 l1.6,0.6 l0.8,1.8 l1.6,0.4 l-0.6,1.6 l-2,0.2 l-0.6,2.2 l-1.2,-1.6 l-1.8,1 l0.6,-2.2 l-1.8,-0.4 z"/><path d="M42.4,34.6 l2.6,-1 l1.6,-1.6 l2,0.4 l0.6,-1.4 l1,1.6 l-1.4,1.4 l0.4,1.4 l-2,0.2 l-1,1.6 l-1.2,-1.6 l-2.6,0.2 z"/><rect x="31.6" y="43" width="2.2" height="2.2" fill="none" stroke="#00ffff" stroke-width="0.8"/></g></g><g transform="translate(118.8,118.8)"><polygon points="22.1,7.6 28,6.7 35.6,6.3 38.8,7.6 41.5,10.8 45.3,10.2 50.7,11.9 53.4,16.2 53.9,21.6 55.6,27 55.6,32.4 53.4,36.7 50.7,39.9 47.5,41 45.3,43.1 43.1,45.3 39.9,47.5 34.5,48.5 31.3,49.1 27,48.5 22.7,48 18.3,46.4 14,47.5 10.8,45.8 8.6,42.1 6.5,37.8 4.3,35.6 4.9,31.3 6.5,27 7.6,23.7 9.7,20.5 12.9,17.3 16.2,15.1 19.4,11.9 21,9.2" fill="#fff"/><g fill="#00ffff"><rect x="30.8" y="9.0" width="1" height="1"/><rect x="32.9" y="9.0" width="1" height="1"/><rect x="20.9" y="11.9" width="1" height="1"/><rect x="43.2" y="13.0" width="1" height="1"/><rect x="46.4" y="12.4" width="1" height="1"/><rect x="48.6" y="16.8" width="1" height="1"/><rect x="50.2" y="16.2" width="1" height="1"/><rect x="38.3" y="14.1" width="1" height="1"/><rect x="37.8" y="16.8" width="1" height="1"/><rect x="41.0" y="22.7" width="1" height="1"/><rect x="48.6" y="21.1" width="1" height="1"/><rect x="51.8" y="24.9" width="1" height="1"/><rect x="52.4" y="29.7" width="1" height="1"/><rect x="53.4" y="31.9" width="1" height="1"/><rect x="14.6" y="20.0" width="1" height="1"/><rect x="9.7" y="21.1" width="1" height="1"/><rect x="16.2" y="22.2" width="1" height="1"/><rect x="16.8" y="27.0" width="1" height="1"/><rect x="18.9" y="27.5" width="1" height="1"/><rect x="18.9" y="31.3" width="1" height="1"/><rect x="8.1" y="30.0" width="1" height="1"/><rect x="27.0" y="30.8" width="1" height="1"/><rect x="21.1" y="36.2" width="1" height="1"/><rect x="24.9" y="36.7" width="1" height="1"/><rect x="29.7" y="35.1" width="1" height="1"/><rect x="31.9" y="34.0" width="1" height="1"/><rect x="34.0" y="32.9" width="1" height="1"/><rect x="36.2" y="31.9" width="1" height="1"/><rect x="38.3" y="34.0" width="1" height="1"/><rect x="40.5" y="36.2" width="1" height="1"/><rect x="36.2" y="37.3" width="1" height="1"/><rect x="37.8" y="37.8" width="1" height="1"/><rect x="42.6" y="40.5" width="1" height="1"/><rect x="41.0" y="42.1" width="1" height="1"/><rect x="47.0" y="39.4" width="1" height="1"/><rect x="48.0" y="36.7" width="1" height="1"/><rect x="22.7" y="40.0" width="1" height="1"/><rect x="22.2" y="42.6" width="1" height="1"/><rect x="10.3" y="42.1" width="1" height="1"/><rect x="18.9" y="44.8" width="1" height="1"/><rect x="37.3" y="43.7" width="1" height="1"/><rect x="27.0" y="45.9" width="1" height="1"/><rect x="28.1" y="47.0" width="1" height="1"/><rect x="43.7" y="11.9" width="1" height="1"/><rect x="49.1" y="13.0" width="1" height="1"/><rect x="38.9" y="17.3" width="1" height="1"/><rect x="50.4" y="19.5" width="1" height="1"/><path d="M24,40 l2,-1.4 l1.6,0.6 l0.8,1.8 l1.6,0.4 l-0.6,1.6 l-2,0.2 l-0.6,2.2 l-1.2,-1.6 l-1.8,1 l0.6,-2.2 l-1.8,-0.4 z"/><path d="M42.4,34.6 l2.6,-1 l1.6,-1.6 l2,0.4 l0.6,-1.4 l1,1.6 l-1.4,1.4 l0.4,1.4 l-2,0.2 l-1,1.6 l-1.2,-1.6 l-2.6,0.2 z"/><rect x="31.6" y="43" width="2.2" height="2.2" fill="none" stroke="#00ffff" stroke-width="0.8"/></g></g></svg>
<div class="fld" style="left:365px;top:95px;width:156px;height:20px;border-color:transparent;background:none"><span>Fixed picture</span></div>
<!--PIC-END-->
<!--BC-START--><div class="raised" style="left:36px;top:294px;width:526px;height:62px"></div>
<svg class="a" style="left:43px;top:301px" width="513" height="48" viewBox="0 0 513 48" shape-rendering="crispEdges"><path d="M0,0h1v48h-1zM3,0h2v48h-2zM8,0h1v48h-1zM11,0h2v48h-2zM15,0h1v48h-1zM17,0h2v48h-2zM21,0h1v48h-1zM25,0h1v48h-1zM28,0h2v48h-2zM33,0h1v48h-1zM36,0h2v48h-2zM40,0h1v48h-1zM42,0h3v48h-3zM47,0h1v48h-1zM49,0h1v48h-1zM53,0h2v48h-2zM58,0h1v48h-1zM61,0h2v48h-2zM65,0h1v48h-1zM67,0h2v48h-2zM71,0h1v48h-1zM75,0h1v48h-1zM78,0h2v48h-2zM83,0h1v48h-1zM86,0h2v48h-2zM90,0h1v48h-1zM92,0h2v48h-2zM96,0h1v48h-1zM100,0h1v48h-1zM103,0h2v48h-2zM108,0h1v48h-1zM111,0h2v48h-2zM115,0h1v48h-1zM117,0h2v48h-2zM121,0h1v48h-1zM125,0h1v48h-1zM128,0h2v48h-2zM133,0h1v48h-1zM136,0h2v48h-2zM140,0h1v48h-1zM142,0h2v48h-2zM146,0h1v48h-1zM150,0h1v48h-1zM153,0h2v48h-2zM158,0h1v48h-1zM161,0h2v48h-2zM165,0h1v48h-1zM167,0h2v48h-2zM171,0h1v48h-1zM175,0h1v48h-1zM178,0h2v48h-2zM183,0h1v48h-1zM186,0h2v48h-2zM190,0h1v48h-1zM192,0h2v48h-2zM196,0h1v48h-1zM200,0h1v48h-1zM203,0h2v48h-2zM208,0h1v48h-1zM211,0h2v48h-2zM215,0h1v48h-1zM217,0h2v48h-2zM221,0h1v48h-1zM225,0h1v48h-1zM228,0h2v48h-2zM233,0h1v48h-1zM236,0h2v48h-2zM240,0h1v48h-1zM242,0h2v48h-2zM246,0h1v48h-1zM250,0h1v48h-1zM253,0h2v48h-2zM258,0h1v48h-1zM261,0h2v48h-2zM265,0h1v48h-1zM267,0h2v48h-2zM271,0h1v48h-1zM275,0h1v48h-1zM278,0h2v48h-2zM283,0h1v48h-1zM286,0h2v48h-2zM290,0h1v48h-1zM292,0h2v48h-2zM296,0h1v48h-1zM300,0h1v48h-1zM303,0h2v48h-2zM308,0h1v48h-1zM311,0h2v48h-2zM315,0h1v48h-1zM317,0h2v48h-2zM321,0h1v48h-1zM325,0h1v48h-1zM328,0h2v48h-2zM333,0h1v48h-1zM336,0h2v48h-2zM340,0h1v48h-1zM342,0h2v48h-2zM346,0h1v48h-1zM350,0h1v48h-1zM353,0h2v48h-2zM358,0h1v48h-1zM361,0h2v48h-2zM365,0h1v48h-1zM367,0h2v48h-2zM371,0h1v48h-1zM375,0h1v48h-1zM378,0h2v48h-2zM383,0h1v48h-1zM386,0h2v48h-2zM390,0h1v48h-1zM392,0h2v48h-2zM396,0h1v48h-1zM400,0h1v48h-1zM403,0h2v48h-2zM408,0h1v48h-1zM411,0h2v48h-2zM415,0h1v48h-1zM417,0h2v48h-2zM421,0h1v48h-1zM425,0h1v48h-1zM428,0h2v48h-2zM433,0h1v48h-1zM436,0h2v48h-2zM440,0h1v48h-1zM442,0h2v48h-2zM446,0h1v48h-1zM450,0h1v48h-1zM453,0h2v48h-2zM458,0h1v48h-1zM461,0h2v48h-2zM465,0h1v48h-1zM467,0h2v48h-2zM471,0h1v48h-1zM475,0h1v48h-1zM478,0h2v48h-2zM483,0h1v48h-1zM486,0h2v48h-2zM490,0h1v48h-1zM492,0h3v48h-3zM497,0h1v48h-1zM499,0h1v48h-1zM503,0h2v48h-2zM508,0h1v48h-1zM511,0h2v48h-2z" fill="#000"/></svg>
<div class="fld" style="left:43px;top:301px;width:80px;height:20px;border-color:transparent;background:none"><span>Barcode</span></div>
<!--BC-END-->
</div>

<!-- status bar -->
<div class="a" style="left:2px;top:534px;width:680px;height:19px;background:#f0f0f0"></div>
<div class="t ui" style="left:3.5px;top:539px;transform:scaleX(0.9)">8.32 0.14</div>
<div class="t ui" style="left:597px;top:539px;transform:scaleX(0.995)">NUM</div>
<div class="a" style="left:592px;top:536px;width:1px;height:16px;background:#d7d7d7"></div>
<div class="a" style="left:628px;top:536px;width:1px;height:16px;background:#d7d7d7"></div>
<div class="a" style="left:663px;top:536px;width:1px;height:16px;background:#d7d7d7"></div>
<svg class="a" style="left:672px;top:542px" width="10" height="10" viewBox="672 542 10 10" shape-rendering="crispEdges" fill="#bfbfbf"><rect x="679" y="543" width="2" height="2"/><rect x="676" y="546" width="2" height="2"/><rect x="679" y="546" width="2" height="2"/><rect x="673" y="549" width="2" height="2"/><rect x="676" y="549" width="2" height="2"/><rect x="679" y="549" width="2" height="2"/></svg>
</body>
</html>
